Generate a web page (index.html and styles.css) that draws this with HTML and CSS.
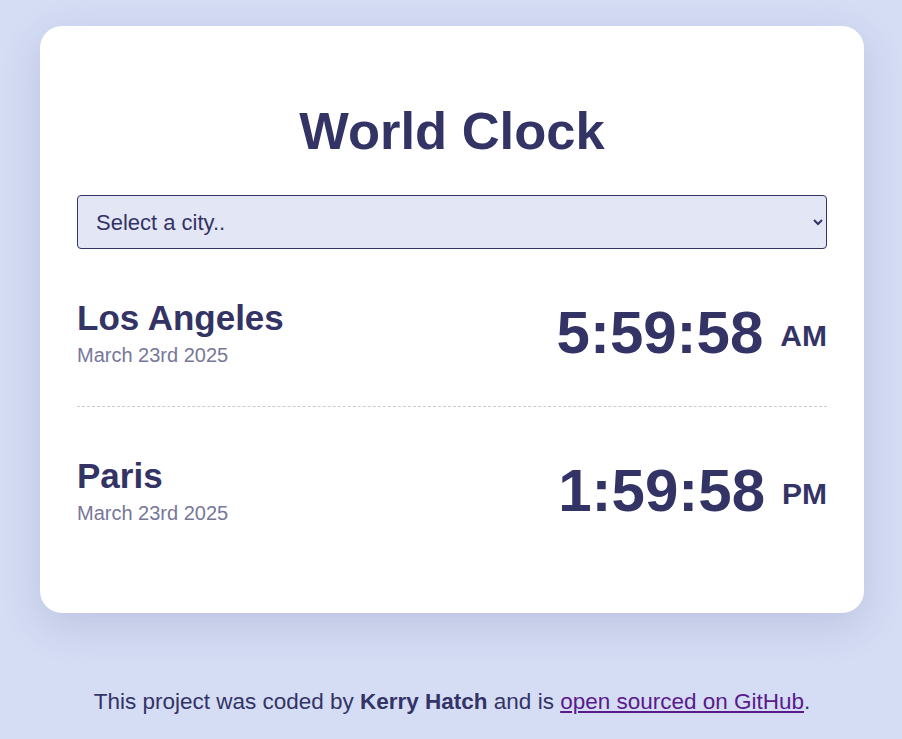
FILE: index.html
```html
<!DOCTYPE html>
<html lang="en">
<head>
<meta charset="utf-8">
<title>World Clock</title>
<link rel="stylesheet" href="styles.css">
</head>
<body>
<div class="page">
  <main class="card">
    <h1 class="title">World Clock</h1>
    <select class="city-select">
      <option>Select a city..</option>
      <option>Los Angeles</option>
      <option>Paris</option>
      <option>Tokyo</option>
    </select>
    <div class="cities">
      <div class="city">
        <div class="city-info">
          <h2 class="city-name">Los Angeles</h2>
          <div class="city-date">March 23rd 2025</div>
        </div>
        <div class="city-time">5:59:58<span class="ampm">AM</span></div>
      </div>
      <div class="city">
        <div class="city-info">
          <h2 class="city-name">Paris</h2>
          <div class="city-date">March 23rd 2025</div>
        </div>
        <div class="city-time">1:59:58<span class="ampm">PM</span></div>
      </div>
    </div>
  </main>
  <footer class="footer">
    This project was coded by <strong>Kerry Hatch</strong> and is <a href="#" class="footer-link">open sourced on GitHub</a>.
  </footer>
</div>
</body>
</html>
```
FILE: styles.css
```css
html, body {
  margin: 0;
  padding: 0;
}
body {
  background: #d5ddf5;
  font-family: "Liberation Sans", Arial, sans-serif;
  color: #333366;
  min-height: 739px;
}
.page {
  padding: 26px 38px 0 40px;
}
.card {
  background: #ffffff;
  border-radius: 22px;
  box-shadow: 0 12px 40px rgba(50, 60, 110, 0.16);
  padding: 74px 37px 49px;
}
.title {
  margin: 0 0 34px;
  text-align: center;
  font-size: 52.5px;
  font-weight: 700;
  line-height: normal;
}
.city-select {
  display: block;
  width: 100%;
  height: 54px;
  box-sizing: border-box;
  background-color: #e3e7f5;
  border: 1px solid #333366;
  border-radius: 4px;
  color: #333366;
  font-family: "Liberation Sans", Arial, sans-serif;
  font-size: 22px;
  padding: 0 6px 0 14px;
}
.city {
  display: flex;
  justify-content: space-between;
  align-items: center;
  padding: 49px 0 39px;
  border-bottom: 1px dashed #cccccc;
}
.city:last-child {
  border-bottom: none;
}
.city-name {
  margin: 0 0 6px;
  font-size: 35px;
  font-weight: 700;
  line-height: normal;
}
.city-date {
  font-size: 20px;
  color: #77779a;
}
.city-time {
  font-size: 60px;
  font-weight: 700;
  line-height: normal;
  display: flex;
  align-items: center;
}
.ampm {
  font-size: 30px;
  margin-left: 17px;
  margin-top: 6px;
}
.footer {
  text-align: center;
  font-size: 22.5px;
  padding-top: 76px;
  color: #333366;
}
.footer strong {
  font-weight: 700;
}
.footer-link {
  color: #5a1a8c;
}
```
